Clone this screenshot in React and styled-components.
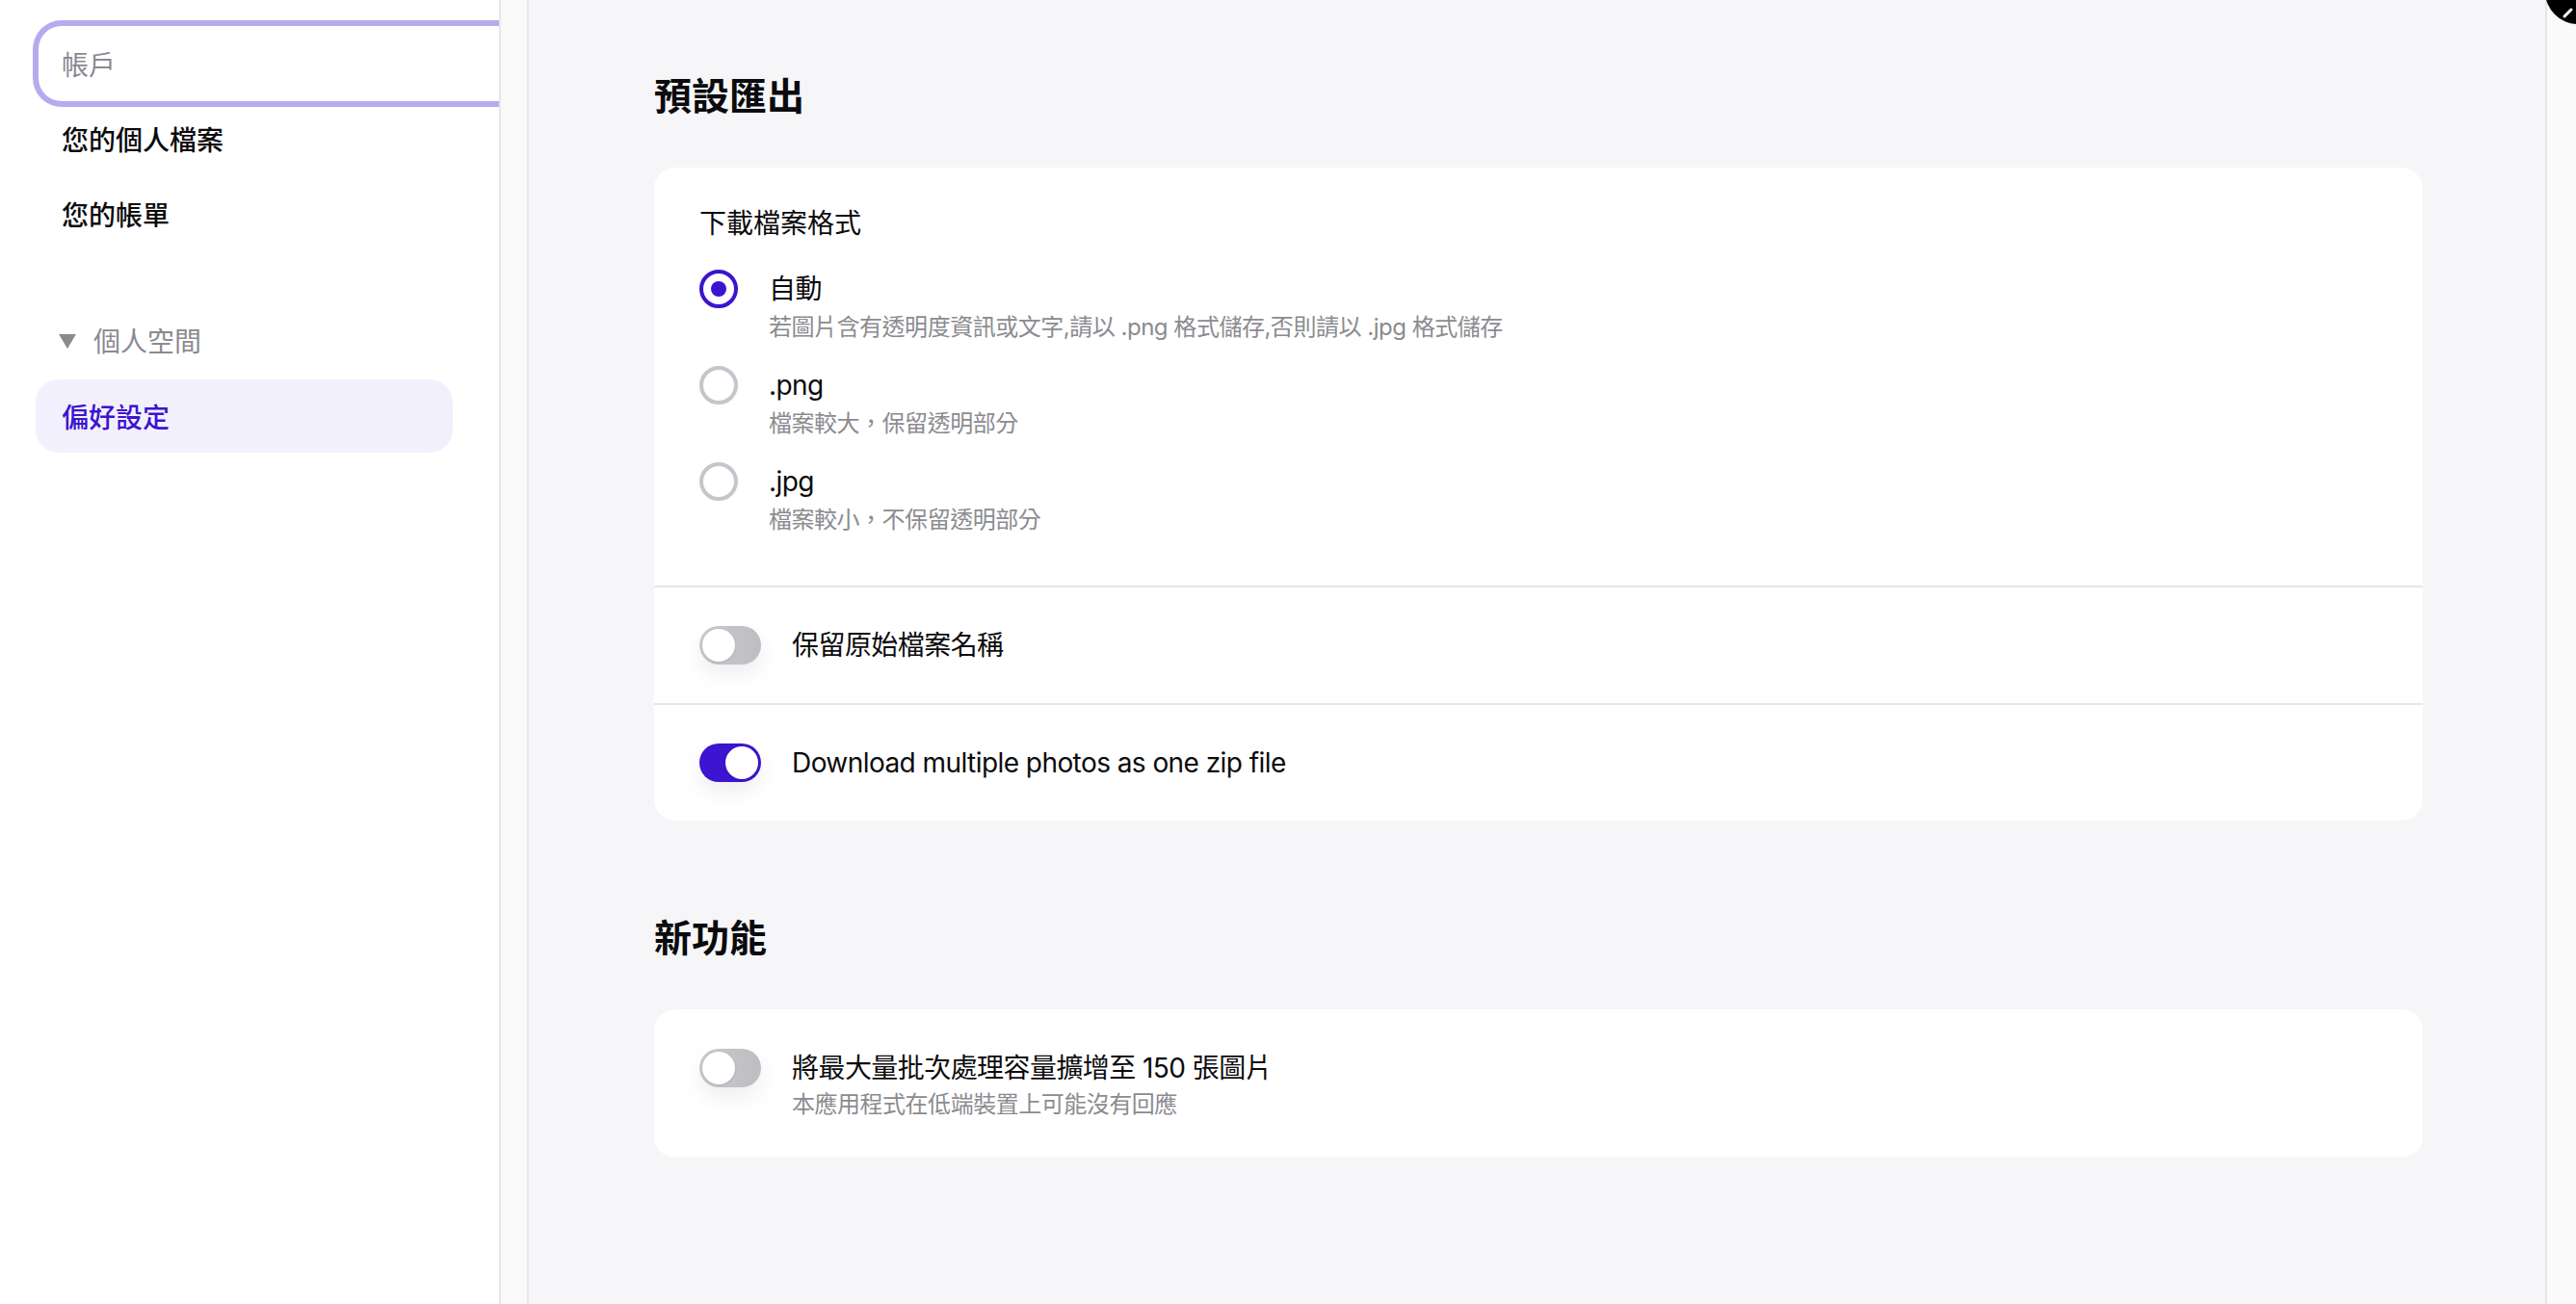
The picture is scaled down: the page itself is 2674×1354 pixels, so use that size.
import { useState } from 'react';
import styled, { createGlobalStyle } from 'styled-components';

const GlobalStyle = createGlobalStyle`
  html, body {
    margin: 0;
    padding: 0;
    height: 100%;
  }
  body {
    font-family: Inter, "Noto Sans CJK TC", "Noto Sans", sans-serif;
    color: #0b0b0d;
    background: #f6f6f8;
  }
  * {
    box-sizing: border-box;
  }
`;

const Layout = styled.div`
  display: flex;
  height: 100vh;
  overflow: hidden;
  position: relative;
`;

const Sidebar = styled.nav`
  width: 520px;
  flex-shrink: 0;
  background: #ffffff;
  border-right: 2px solid #e7e7eb;
  padding: 27px 48px 0 37px;
  overflow: hidden;
  display: flex;
  flex-direction: column;
`;

const ScrollTrack = styled.div`
  width: ${({ $w }) => $w}px;
  flex-shrink: 0;
  background: #fafafa;
  border-${({ $side }) => $side}: 2px solid #e6e6ea;
`;

const NavItem = styled.a`
  height: 78px;
  display: flex;
  align-items: center;
  padding-left: 27px;
  border-radius: 24px;
  font-size: 28px;
  font-weight: 500;
  color: ${({ $active }) => ($active ? '#3d14cf' : '#0b0b0d')};
  background: ${({ $active }) => ($active ? '#f3f0fd' : 'transparent')};
  text-decoration: none;
  cursor: pointer;
`;

const FocusItem = styled(NavItem)`
  margin-left: 3px;
  margin-right: -80px;
  padding-left: 24px;
  color: #8a8a8f;
  font-weight: 400;
  background: #ffffff;
  box-shadow: 0 0 0 6px #b9aaee;
`;

const GroupHeader = styled.div`
  height: 76px;
  margin-top: 54px;
  display: flex;
  align-items: center;
  gap: 18px;
  padding-left: 24px;
  font-size: 28px;
  color: #8a8a8f;
  cursor: pointer;
`;

const Caret = styled.span`
  width: 0;
  height: 0;
  border-left: 9px solid transparent;
  border-right: 9px solid transparent;
  border-top: 15px solid #8a8a8f;
  margin-top: 2px;
`;

const ActiveItem = styled(NavItem)`
  height: 76px;
  margin-top: 3px;
`;

const Main = styled.main`
  flex: 1;
  background: #f6f6f8;
  padding: 76px 127px 0 130px;
  overflow: hidden;
`;

const SectionTitle = styled.h2`
  margin: 0 0 50px;
  font-size: 39px;
  line-height: 48px;
  font-weight: 700;
  color: #0b0b0d;
`;

const Card = styled.section`
  background: #ffffff;
  border-radius: 22px;
  margin-bottom: ${({ $gap }) => $gap || 0}px;
`;

const FormatBlock = styled.div`
  padding: 40px 47px 48px;
  border-bottom: 2px solid #e6e6eb;
`;

const GroupLabel = styled.div`
  font-size: 28px;
  line-height: 36px;
  margin-bottom: 30px;
`;

const RadioList = styled.div`
  display: flex;
  flex-direction: column;
  gap: 20px;
`;

const RadioRow = styled.label`
  display: flex;
  align-items: flex-start;
  gap: 32px;
  cursor: pointer;
`;

const RadioDot = styled.span`
  width: 40px;
  height: 40px;
  flex-shrink: 0;
  border-radius: 50%;
  border: 4px solid ${({ $on }) => ($on ? '#3d14cf' : '#c5c5cb')};
  display: flex;
  align-items: center;
  justify-content: center;

  &::after {
    content: '';
    width: 16px;
    height: 16px;
    border-radius: 50%;
    background: ${({ $on }) => ($on ? '#3d14cf' : 'transparent')};
  }
`;

const TextCol = styled.div`
  display: flex;
  flex-direction: column;
`;

const Label = styled.div`
  font-size: 28px;
  line-height: 40px;
  letter-spacing: -0.02em;
  color: #0b0b0d;
`;

const Hint = styled.div`
  font-size: 24px;
  line-height: ${({ $lh }) => $lh || 40}px;
  letter-spacing: -0.02em;
  color: #8b8b90;
`;

const ToggleRow = styled.div`
  display: flex;
  align-items: ${({ $top }) => ($top ? 'flex-start' : 'center')};
  gap: 32px;
  padding: ${({ $pad }) => $pad || '40px 47px'};
  border-bottom: ${({ $line }) => ($line ? '2px solid #e6e6eb' : 'none')};
`;

const Switch = styled.button`
  position: relative;
  width: 64px;
  height: 40px;
  flex-shrink: 0;
  border: none;
  padding: 0;
  border-radius: 20px;
  background: ${({ $on }) =>
    $on ? '#3d14cf' : 'linear-gradient(90deg, #c9c9ce, #bdbdc2)'};
  box-shadow: 0 10px 22px rgba(20, 20, 40, 0.07);
  cursor: pointer;

  &::after {
    content: '';
    position: absolute;
    top: 3px;
    left: ${({ $on }) => ($on ? '27px' : '3px')};
    width: 34px;
    height: 34px;
    border-radius: 50%;
    background: #ffffff;
    box-shadow: 0 1px 3px rgba(0, 0, 0, 0.12);
  }
`;

const CloseBubble = styled.div`
  position: absolute;
  top: -43px;
  right: -36px;
  width: 68px;
  height: 68px;
  border-radius: 50%;
  background: #000000;
`;

const formats = [
  { id: 'auto', label: '自動', hint: '若圖片含有透明度資訊或文字,請以 .png 格式儲存,否則請以 .jpg 格式儲存' },
  { id: 'png', label: '.png', hint: '檔案較大，保留透明部分' },
  { id: 'jpg', label: '.jpg', hint: '檔案較小，不保留透明部分' },
];

export default function App() {
  const [format, setFormat] = useState('auto');
  const [keepName, setKeepName] = useState(false);
  const [zip, setZip] = useState(true);
  const [bigBatch, setBigBatch] = useState(false);

  return (
    <Layout>
      <GlobalStyle />
      <Sidebar>
        <FocusItem>帳戶</FocusItem>
        <NavItem>您的個人檔案</NavItem>
        <NavItem>您的帳單</NavItem>
        <GroupHeader>
          <Caret />
          個人空間
        </GroupHeader>
        <ActiveItem $active>偏好設定</ActiveItem>
      </Sidebar>
      <ScrollTrack $w={29} $side="right" />

      <Main>
        <SectionTitle>預設匯出</SectionTitle>
        <Card $gap={98}>
          <FormatBlock>
            <GroupLabel>下載檔案格式</GroupLabel>
            <RadioList>
              {formats.map((f) => (
                <RadioRow key={f.id} onClick={() => setFormat(f.id)}>
                  <RadioDot $on={format === f.id} />
                  <TextCol>
                    <Label>{f.label}</Label>
                    <Hint>{f.hint}</Hint>
                  </TextCol>
                </RadioRow>
              ))}
            </RadioList>
          </FormatBlock>
          <ToggleRow $line>
            <Switch $on={keepName} onClick={() => setKeepName(!keepName)} />
            <Label>保留原始檔案名稱</Label>
          </ToggleRow>
          <ToggleRow>
            <Switch $on={zip} onClick={() => setZip(!zip)} />
            <Label>Download multiple photos as one zip file</Label>
          </ToggleRow>
        </Card>

        <SectionTitle>新功能</SectionTitle>
        <Card>
          <ToggleRow $top $pad="41px 47px 37px">
            <Switch $on={bigBatch} onClick={() => setBigBatch(!bigBatch)} />
            <TextCol>
              <Label>將最大量批次處理容量擴增至 150 張圖片</Label>
              <Hint $lh={36}>本應用程式在低端裝置上可能沒有回應</Hint>
            </TextCol>
          </ToggleRow>
        </Card>
      </Main>

      <ScrollTrack $w={32} $side="left" />
      <CloseBubble>
        <svg width="68" height="68" viewBox="0 0 68 68">
          <line x1="20" y1="60" x2="27" y2="53" stroke="#fff" strokeWidth="3" strokeLinecap="round" />
        </svg>
      </CloseBubble>
    </Layout>
  );
}
